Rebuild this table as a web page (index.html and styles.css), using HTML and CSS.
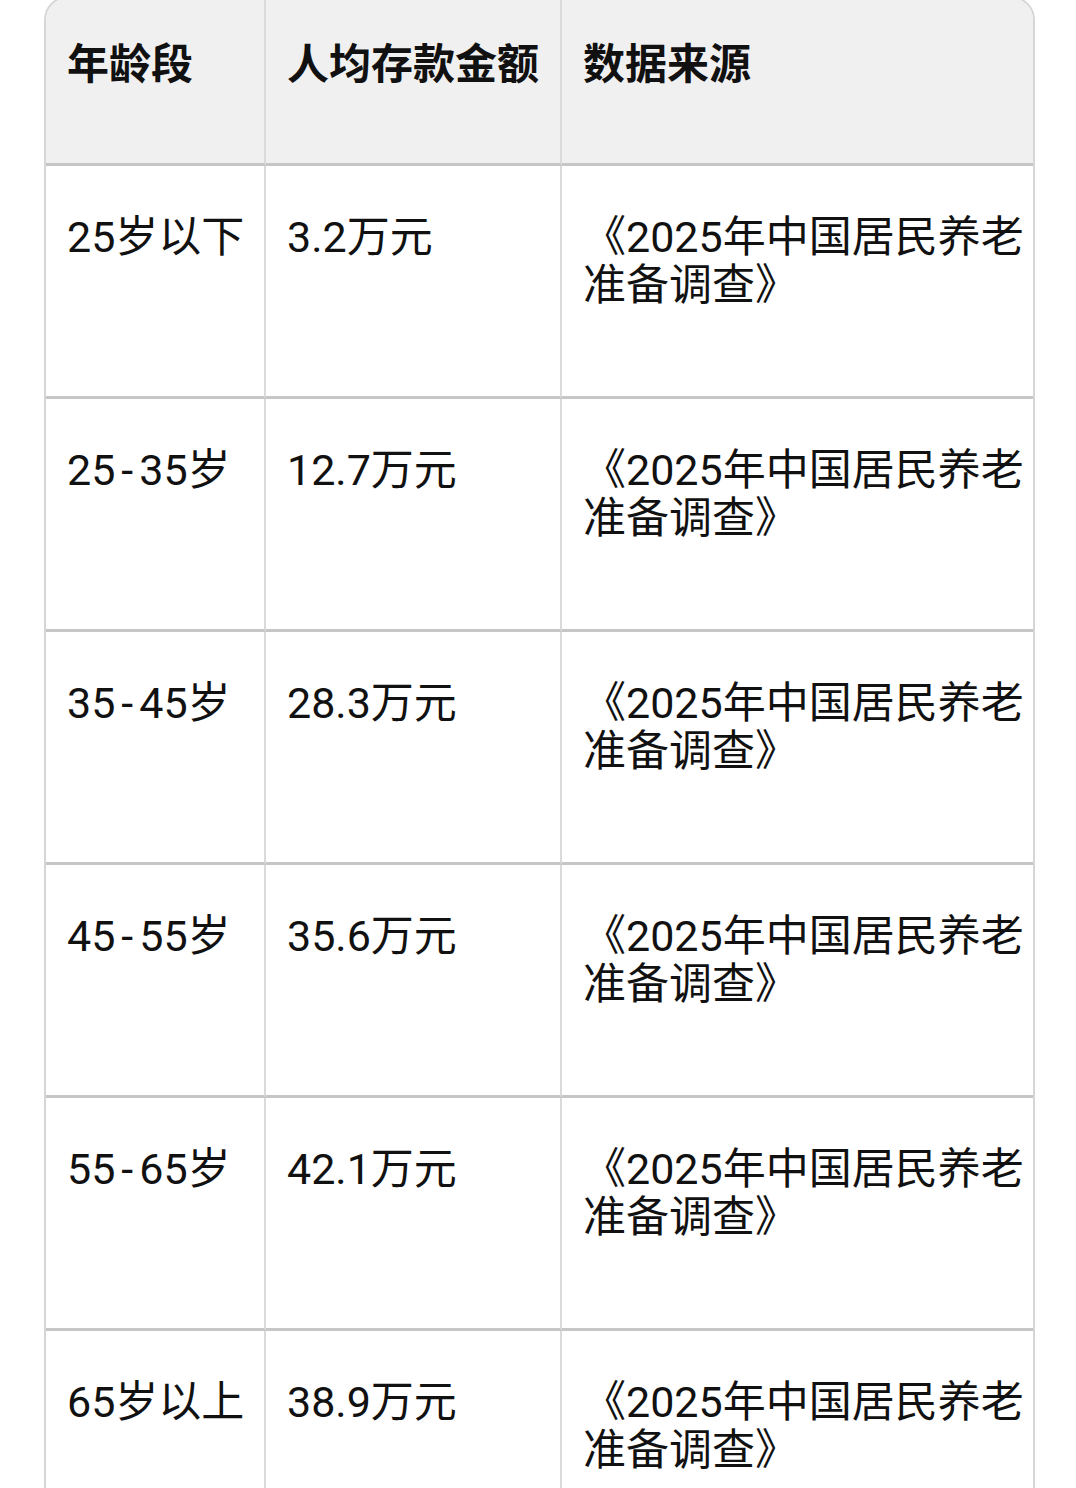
FILE: index.html
```html
<!DOCTYPE html>
<html lang="zh-CN">
<head>
<meta charset="utf-8">
<link rel="stylesheet" href="styles.css">
</head>
<body>
<div class="frame">
<div class="table">
  <div class="cell head">年龄段</div>
  <div class="cell head">人均存款金额</div>
  <div class="cell head last">数据来源</div>

  <div class="cell">25岁以下</div>
  <div class="cell">3.2万元</div>
  <div class="cell last">《2025年中国居民养老准备调查》</div>

  <div class="cell">25<span class="dash">-</span>35岁</div>
  <div class="cell">12.7万元</div>
  <div class="cell last">《2025年中国居民养老准备调查》</div>

  <div class="cell">35<span class="dash">-</span>45岁</div>
  <div class="cell">28.3万元</div>
  <div class="cell last">《2025年中国居民养老准备调查》</div>

  <div class="cell">45<span class="dash">-</span>55岁</div>
  <div class="cell">35.6万元</div>
  <div class="cell last">《2025年中国居民养老准备调查》</div>

  <div class="cell">55<span class="dash">-</span>65岁</div>
  <div class="cell">42.1万元</div>
  <div class="cell last">《2025年中国居民养老准备调查》</div>

  <div class="cell">65岁以上</div>
  <div class="cell">38.9万元</div>
  <div class="cell last">《2025年中国居民养老准备调查》</div>
</div>
</div>
</body>
</html>
```
FILE: styles.css
```css
html, body {
  margin: 0;
  padding: 0;
  background: #ffffff;
}
.frame {
  height: 1488px;
  overflow: hidden;
}
body {
  font-family: "Roboto", "Noto Sans CJK SC", "Noto Sans", sans-serif;
  color: #111111;
}
.table {
  margin: -4px 0 0 44px;
  width: 991px;
  display: grid;
  grid-template-columns: 220px 296px 475px;
  grid-template-rows: 168px;
  grid-auto-rows: 233px;
  border: 2px solid #d6d6d6;
  border-bottom: none;
  border-radius: 24px 24px 0 0;
  overflow: hidden;
  box-sizing: border-box;
}
.cell {
  box-sizing: border-box;
  border-right: 2px solid #dadada;
  border-bottom: 3px solid #c6c6c6;
  padding: 47px 4px 0 21px;
  font-size: 43px;
  line-height: 48px;
  background: #ffffff;
}
.cell.last {
  border-right: none;
  padding-right: 2px;
}
.head {
  background: #f0f0f0;
  font-weight: 700;
  font-size: 42px;
  padding-top: 43px;
}
.dash {
  padding: 0 6px;
}
```
